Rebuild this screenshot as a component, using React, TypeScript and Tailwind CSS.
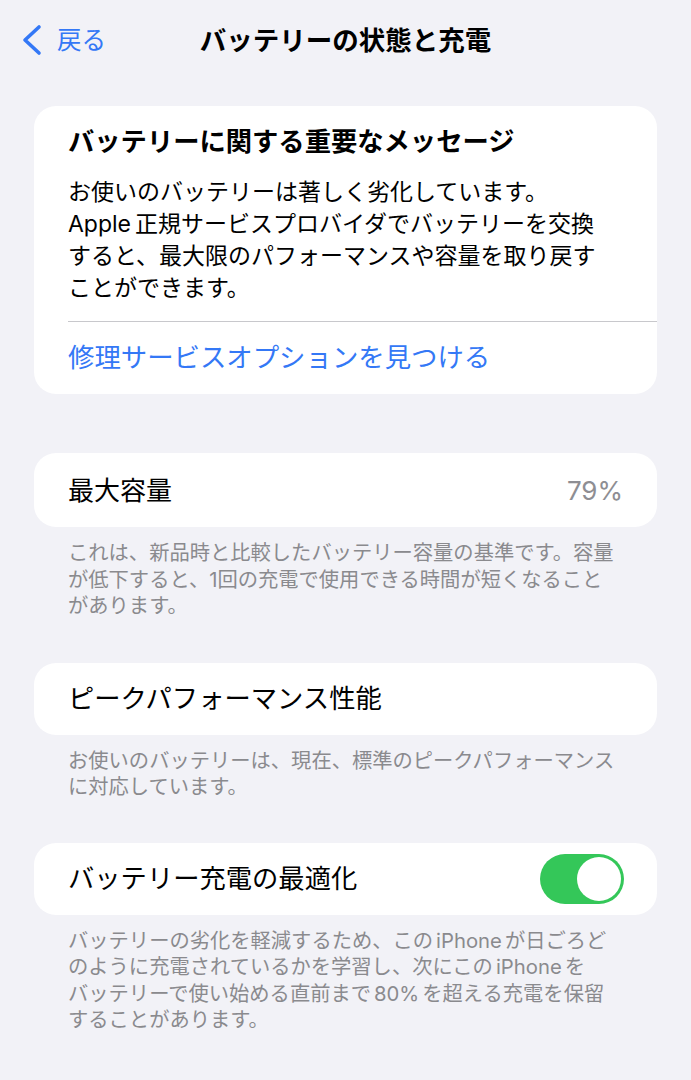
import React from "react";

const FONT = { fontFamily: '"Inter", "Noto Sans CJK JP", sans-serif' };

function Footer({ lines }: { lines: React.ReactNode[] }) {
  return (
    <div className="pl-[68px] pt-[13px] text-[20.3px] leading-[26.5px] text-[#8a8a8e]">
      {lines.map((l, i) => (
        <div key={i} className="whitespace-nowrap">
          {l}
        </div>
      ))}
    </div>
  );
}

function Latin({ children }: { children: React.ReactNode }) {
  return <span className="mx-[3px]">{children}</span>;
}

export default function App() {
  return (
    <div
      className="w-[691px] h-[1080px] overflow-hidden bg-[#f2f2f7] text-black"
      style={FONT}
    >
      {/* Nav bar */}
      <div className="grid h-[80px] grid-cols-[1fr_auto_1fr] items-center">
        <div className="flex items-center pl-[19px] text-[#3478f6]">
          <svg width="26" height="32" viewBox="0 0 26 32" className="mr-[12px]">
            <path
              d="M20 3 L6 16 L20 29"
              fill="none"
              stroke="#3478f6"
              strokeWidth="3.6"
              strokeLinecap="round"
              strokeLinejoin="round"
            />
          </svg>
          <span className="text-[24.5px] leading-[30px]">戻る</span>
        </div>
        <div className="text-[26.5px] font-bold leading-[36px] whitespace-nowrap">
          バッテリーの状態と充電
        </div>
        <div />
      </div>

      <div className="px-[34px] pt-[26px]">
        {/* Card 1 */}
        <div className="rounded-[22px] bg-white pl-[34px]">
          <div className="pr-[34px] pt-[18px] pb-[17px]">
            <div className="text-[26.3px] font-bold leading-[36px] whitespace-nowrap">
              バッテリーに関する重要なメッセージ
            </div>
            <div className="mt-[16px] text-[23px] leading-[32px]">
              <div className="whitespace-nowrap">お使いのバッテリーは著しく劣化しています。</div>
              <div className="whitespace-nowrap">
                <span className="mr-[4px]">Apple</span>正規サービスプロバイダでバッテリーを交換
              </div>
              <div className="whitespace-nowrap">すると、最大限のパフォーマンスや容量を取り戻す</div>
              <div className="whitespace-nowrap">ことができます。</div>
            </div>
          </div>
          <div className="h-px bg-[#c8c8cc]" />
          <div className="flex h-[72px] items-center text-[26.4px] text-[#3478f6] whitespace-nowrap">
            修理サービスオプションを見つける
          </div>
        </div>
      </div>

      {/* Card 2 */}
      <div className="px-[34px] pt-[59px]">
        <div className="flex h-[74px] items-center justify-between rounded-[22px] bg-white px-[34px] text-[26px]">
          <span>最大容量</span>
          <span className="text-[#8e8e93]">79%</span>
        </div>
      </div>
      <Footer
        lines={[
          "これは、新品時と比較したバッテリー容量の基準です。容量",
          "が低下すると、1回の充電で使用できる時間が短くなること",
          "があります。",
        ]}
      />

      {/* Card 3 */}
      <div className="px-[34px] pt-[43px]">
        <div className="flex h-[72px] items-center rounded-[22px] bg-white px-[34px] text-[26.3px]">
          <span>ピークパフォーマンス性能</span>
        </div>
      </div>
      <Footer
        lines={[
          "お使いのバッテリーは、現在、標準のピークパフォーマンス",
          "に対応しています。",
        ]}
      />

      {/* Card 4 */}
      <div className="px-[34px] pt-[42px]">
        <div className="flex h-[72px] items-center justify-between rounded-[22px] bg-white pl-[34px] pr-[33px] text-[26.3px]">
          <span>バッテリー充電の最適化</span>
          <div className="flex h-[50px] w-[84px] items-center justify-end rounded-full bg-[#34c759] p-[3px]">
            <div className="h-[44px] w-[44px] rounded-full bg-white" />
          </div>
        </div>
      </div>
      <Footer
        lines={[
          <>
            バッテリーの劣化を軽減するため、この<Latin>iPhone</Latin>が日ごろど
          </>,
          <>
            のように充電されているかを学習し、次にこの<Latin>iPhone</Latin>を
          </>,
          <>
            バッテリーで使い始める直前まで<Latin>80%</Latin>を超える充電を保留
          </>,
          "することがあります。",
        ]}
      />
    </div>
  );
}
